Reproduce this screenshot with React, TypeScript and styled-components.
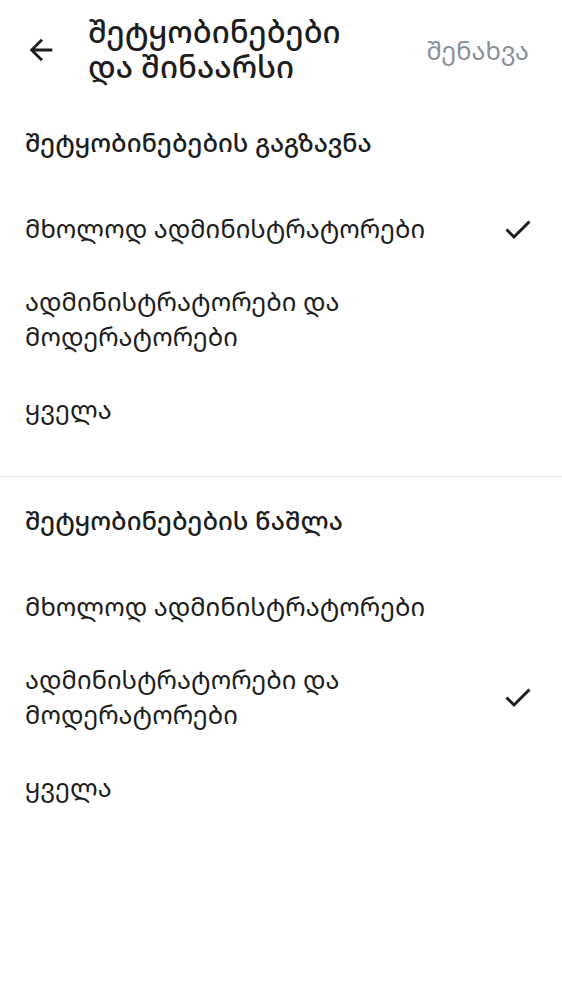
import React from "react";
import styled, { createGlobalStyle } from "styled-components";

const Global = createGlobalStyle`
  html, body { margin: 0; padding: 0; background: #ffffff; }
  body { font-family: "Noto Sans Georgian", "Noto Sans", "DejaVu Sans", sans-serif; color: #1d1d20; }
`;

const Page = styled.div`
  width: 562px;
  min-height: 1000px;
  background: #fff;
  display: flex;
  flex-direction: column;
`;

const TopBar = styled.header`
  display: flex;
  align-items: center;
  padding: 15px 33px 14px 24px;
`;

const BackButton = styled.button`
  border: 0;
  background: none;
  padding: 0;
  width: 34px;
  height: 34px;
  display: flex;
  align-items: center;
  justify-content: center;
  color: #1d1d20;
  margin-right: 30px;
`;

const Title = styled.h1`
  flex: 1;
  margin: 0;
  display: flex;
  flex-direction: column;
  font-size: 31px;
  font-weight: 500;
  color: #1d1d20;
`;

const TitleLine = styled.span`
  display: block;
  height: 35px;
  line-height: 33px;
`;

const SaveButton = styled.button`
  border: 0;
  background: none;
  padding: 0;
  font-family: inherit;
  font-size: 25.5px;
  color: #8b909a;
`;

const Section = styled.section<{ $divider?: boolean }>`
  padding: 26px 0 30px;
  border-bottom: ${(p) => (p.$divider ? "1px solid #e6e8ee" : "none")};
`;

const SectionTitle = styled.h2`
  margin: 0 0 32px;
  padding: 0 25px;
  font-size: 25.5px;
  line-height: 35px;
  font-weight: 500;
`;

const Option = styled.div`
  display: flex;
  align-items: center;
  justify-content: space-between;
  padding: 19px 30px 19px 25px;
`;

const OptionLabel = styled.span`
  font-size: 25.5px;
  line-height: 35px;
  max-width: 420px;
`;

const Check = () => (
  <svg width="28" height="24" viewBox="0 0 28 24" fill="none">
    <path d="M2.5 12.5 L10 20 L25.5 4.5" stroke="#1d1d20" strokeWidth="3" />
  </svg>
);

const Arrow = () => (
  <svg width="34" height="34" viewBox="0 0 24 24">
    <path
      d="M20 11H7.83l5.59-5.59L12 4l-8 8 8 8 1.41-1.41L7.83 13H20v-2z"
      fill="#1d1d20"
    />
  </svg>
);

type Group = { title: string; options: string[]; selected: number };

const groups: Group[] = [
  {
    title: "შეტყობინებების გაგზავნა",
    options: [
      "მხოლოდ ადმინისტრატორები",
      "ადმინისტრატორები და მოდერატორები",
      "ყველა",
    ],
    selected: 0,
  },
  {
    title: "შეტყობინებების წაშლა",
    options: [
      "მხოლოდ ადმინისტრატორები",
      "ადმინისტრატორები და მოდერატორები",
      "ყველა",
    ],
    selected: 1,
  },
];

export default function App() {
  return (
    <Page>
      <Global />
      <TopBar>
        <BackButton aria-label="back">
          <Arrow />
        </BackButton>
        <Title>
          <TitleLine>შეტყობინებები</TitleLine>
          <TitleLine>და შინაარსი</TitleLine>
        </Title>
        <SaveButton>შენახვა</SaveButton>
      </TopBar>
      {groups.map((g, gi) => (
        <Section key={gi} $divider={gi === 0}>
          <SectionTitle>{g.title}</SectionTitle>
          {g.options.map((o, oi) => (
            <Option key={oi}>
              <OptionLabel>{o}</OptionLabel>
              {oi === g.selected && <Check />}
            </Option>
          ))}
        </Section>
      ))}
    </Page>
  );
}
